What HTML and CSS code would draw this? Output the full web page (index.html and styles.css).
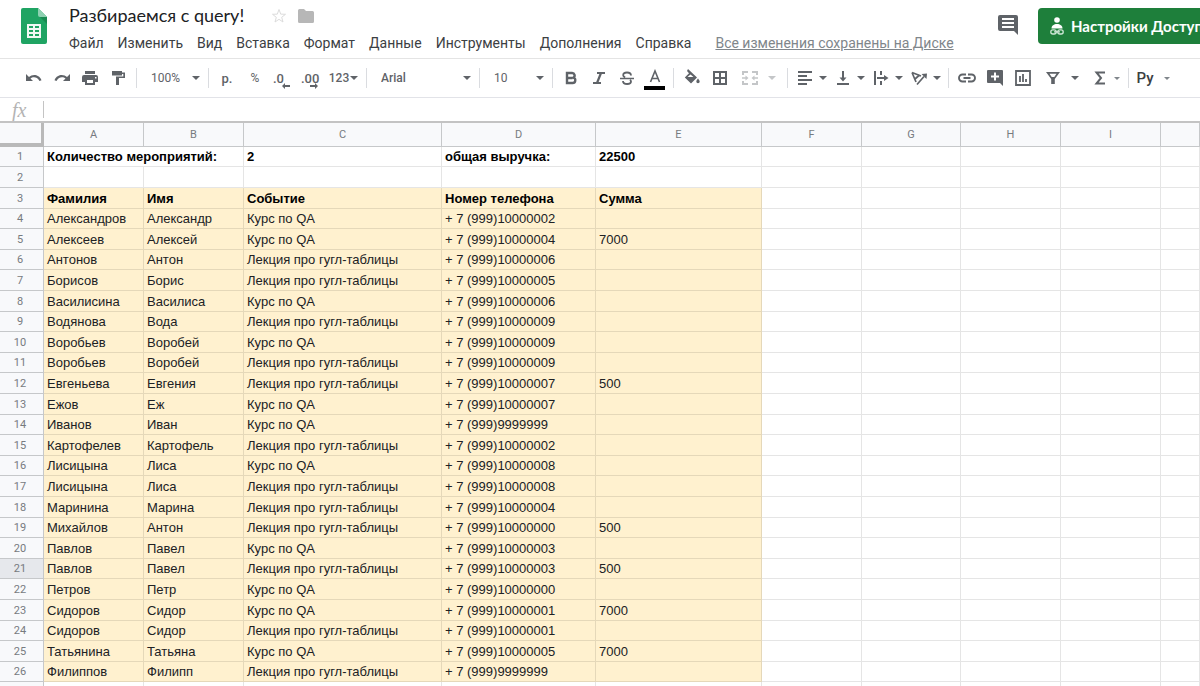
FILE: index.html
```html
<!DOCTYPE html>
<html lang="ru">
<head>
    <meta charset="UTF-8">
    <title>Разбираемся с query!</title>
    <link rel="stylesheet" href="styles.css">
</head>
<body>
    <header class="header">
        <svg class="logo" viewBox="0 0 26 36" aria-hidden="true">
            <path d="M2 0h15l9 9v25a2 2 0 0 1-2 2H2a2 2 0 0 1-2-2V2a2 2 0 0 1 2-2z" fill="#1fa463"/>
            <path d="M17 0l9 9h-7a2 2 0 0 1-2-2z" fill="#8ed1b1"/>
            <path d="M19 9h7v7z" fill="#188a51"/>
            <path fill-rule="evenodd" d="M6 16h14v14H6zM8 18v2h4v-2zm6 0v2h4v-2zm-6 4v2h4v-2zm6 0v2h4v-2zm-6 4v2h4v-2zm6 0v2h4v-2z" fill="#f1f8f4"/>
        </svg>
        <div class="doc">
            <div class="title-row">
                <h1 class="title">Разбираемся с query!</h1>
                <button class="title-btn" aria-label="Пометить">
                    <svg width="16" height="16" viewBox="0 0 16 16"><path d="M8 1.5l1.7 4.6 4.8.2-3.8 3 1.3 4.7L8 11.300l-4 2.700 1.300-4.700-3.800-3 4.800-.2z" fill="none" stroke="#dcdcdc"/></svg>
                </button>
                <button class="title-btn" aria-label="Переместить">
                    <svg width="16" height="14" viewBox="0 0 16 14"><path d="M1.500 0H6l2 2h6.500A1.500 1.500 0 0 1 16 3.500v9a1.500 1.500 0 0 1-1.500 1.500h-13A1.500 1.500 0 0 1 0 12.500v-11A1.500 1.500 0 0 1 1.500 0z" fill="#b7b7b7"/></svg>
                </button>
            </div>
            <nav class="menu">
                <button>Файл</button>
                <button>Изменить</button>
                <button>Вид</button>
                <button>Вставка</button>
                <button>Формат</button>
                <button>Данные</button>
                <button>Инструменты</button>
                <button>Дополнения</button>
                <button>Справка</button>
                <a class="saved" href="#">Все изменения сохранены на Диске</a>
            </nav>
        </div>
        <button class="comments" aria-label="Комментарии">
            <svg width="20" height="20" viewBox="0 0 20 20"><path fill-rule="evenodd" d="M2 0h16a2 2 0 0 1 2 2v18l-4-4H2a2 2 0 0 1-2-2V2a2 2 0 0 1 2-2zM4 3v2h12V3zm0 4v2h12V7zm0 4v2h12v-2z" fill="#5f6368"/></svg>
        </button>
        <button class="share">
            <svg width="14" height="18" viewBox="0 0 14 18" aria-hidden="true">
                <circle cx="7" cy="3" r="2.800" fill="#fff"/>
                <path d="M1.500 11.500c0-3 2.500-4.500 5.500-4.500s5.500 1.500 5.500 4.500z" fill="#fff"/>
                <g fill="none" stroke="#cfe8d7" stroke-width="1.300"><rect x=".8" y="12.800" width="5.400" height="4.200" rx="2.100"/><rect x="7.800" y="12.800" width="5.400" height="4.200" rx="2.100"/><path d="M4 14.900h6"/></g>
            </svg>
            Настройки Доступа
        </button>
    </header>

    <div class="toolbar">
        <button class="tool" aria-label="Отменить"><svg viewBox="0 0 18 18"><path d="M1 5v7h7L5.500 9.500c2-1.600 6.500-2.300 9 2.600l2-.8C13.500 4.500 7 5.500 4 8z" fill="currentColor"/></svg></button>
        <button class="tool" aria-label="Повторить"><svg viewBox="0 0 18 18"><path d="M17 5v7h-7l2.500-2.500c-2-1.600-6.500-2.300-9 2.600l-2-.8C4.500 4.500 11 5.500 14 8z" fill="currentColor"/></svg></button>
        <button class="tool" aria-label="Печать"><svg viewBox="0 0 18 18"><path fill-rule="evenodd" d="M4 2h10v3H4zM3 6h12a2 2 0 0 1 2 2v5h-3v3H4v-3H1V8a2 2 0 0 1 2-2zm3 5v3h6v-3zm8-3v1.500h1.500V8z" fill="currentColor"/></svg></button>
        <button class="tool" aria-label="Копировать форматирование"><svg viewBox="0 0 18 18"><path d="M3 2h10v1.500h3V9H10v7H7V7.500h7.300V5H13v1.500H3z" fill="currentColor"/></svg></button>
        <span class="sep"></span>
        <label class="picker zoom"><select aria-label="Масштаб"><option>100%</option></select></label>
        <span class="sep"></span>
        <button class="tool currency">р.</button>
        <button class="tool percent">%</button>
        <button class="tool digits">.0<svg class="arrow" viewBox="0 0 8 6"><path d="M0 3l3-3v2h5v2H3v2z" fill="currentColor"/></svg></button>
        <button class="tool digits">.00<svg class="arrow" viewBox="0 0 8 6"><path d="M8 3L5 0v2H0v2h5v2z" fill="currentColor"/></svg></button>
        <button class="tool format">123<i class="caret"></i></button>
        <span class="sep"></span>
        <label class="picker font"><select aria-label="Шрифт"><option>Arial</option></select></label>
        <span class="sep"></span>
        <label class="picker size"><select aria-label="Размер шрифта"><option>10</option></select></label>
        <span class="sep"></span>
        <button class="tool" aria-label="Полужирный"><svg viewBox="0 0 18 18"><path d="M5 4h5a2.500 2.500 0 0 1 1.300 4.700A2.700 2.700 0 0 1 10.500 14H5zM5 9h5.500" fill="none" stroke="currentColor" stroke-width="2.400"/></svg></button>
        <button class="tool" aria-label="Курсив"><svg viewBox="0 0 18 18"><path d="M7 4h8M3 14h8M11 4L7 14" fill="none" stroke="currentColor" stroke-width="2.200"/></svg></button>
        <button class="tool" aria-label="Зачеркнутый"><svg viewBox="0 0 18 18"><path d="M2 9.500h14" stroke="currentColor" stroke-width="1.500"/><path d="M13 6.500C13 4.500 11.500 3.500 9 3.500S5.200 4.500 5.200 6.200c0 1 .8 1.800 2 2.200M5 12c0 2 1.800 3 4.200 3S13 14 13 12.500c0-.7-.3-1.300-1-1.800" fill="none" stroke="currentColor" stroke-width="1.800"/></svg></button>
        <button class="tool color" aria-label="Цвет текста"><svg viewBox="0 0 18 18"><path d="M4.500 13L9 2l4.500 11M6 9.500h6" fill="none" stroke="currentColor" stroke-width="1.600"/></svg></button>
        <span class="sep"></span>
        <button class="tool" aria-label="Цвет заливки"><svg viewBox="0 0 18 18"><path fill-rule="evenodd" d="M5 0l9 8.500-6 6-6.200-6L6 4.300 4 2zM7.500 5.500L4.500 8h6z" fill="currentColor"/><path d="M15 9.500s1.700 2 1.700 3a1.700 1.700 0 0 1-3.400 0c0-1 1.700-3 1.700-3z" fill="currentColor"/></svg></button>
        <button class="tool" aria-label="Границы"><svg viewBox="0 0 18 18"><path d="M3 3h12v12H3zM9 3v12M3 9h12" fill="none" stroke="currentColor" stroke-width="2"/></svg></button>
        <button class="tool wide" disabled aria-label="Объединить ячейки"><svg viewBox="0 0 18 18"><path d="M2 6V3h5M11 3h5v3M2 12v3h5M11 15h5v-3" fill="none" stroke="currentColor" stroke-width="2"/><path d="M1 8.200h3.500V6.500L7.500 9l-3 2.500V9.800H1zM17 8.200h-3.500V6.500L10.500 9l3 2.500V9.800H17z" fill="currentColor"/></svg><i class="caret"></i></button>
        <span class="sep"></span>
        <button class="tool split" aria-label="Горизонтальное выравнивание"><svg viewBox="0 0 18 18"><path d="M2 3h14M2 7h9M2 11h14M2 15h9" stroke="currentColor" stroke-width="2"/></svg><i class="caret"></i></button>
        <button class="tool split" aria-label="Вертикальное выравнивание"><svg viewBox="0 0 18 18"><path d="M3 15h12M9 2v8" stroke="currentColor" stroke-width="2"/><path d="M5.500 8.500h7L9 12.500z" fill="currentColor"/></svg><i class="caret"></i></button>
        <button class="tool split" aria-label="Перенос текста"><svg viewBox="0 0 18 18"><path d="M3 2v14M9 2v4M9 12v4M5 9h8" stroke="currentColor" stroke-width="2"/><path d="M12 6l4.500 3-4.500 3z" fill="currentColor"/></svg><i class="caret"></i></button>
        <button class="tool split" aria-label="Поворот текста"><svg viewBox="0 0 18 18"><path d="M2 3.500l9 3.500M2 3.500L6 13M5 10l4.500-4M7 15.500l7-8" fill="none" stroke="currentColor" stroke-width="1.700"/><path d="M11.500 5l5.500-.5-.5 5.500z" fill="currentColor"/></svg><i class="caret"></i></button>
        <span class="sep"></span>
        <button class="tool" aria-label="Вставить ссылку"><svg viewBox="0 0 18 18"><path d="M8 5.500H4.500a3.500 3.500 0 0 0 0 7H8M10 5.500h3.500a3.500 3.500 0 0 1 0 7H10M5.500 9h7" fill="none" stroke="currentColor" stroke-width="1.900"/></svg></button>
        <button class="tool" aria-label="Вставить комментарий"><svg viewBox="0 0 18 18"><path fill-rule="evenodd" d="M2 1h14a1 1 0 0 1 1 1v15l-3-3H2a1 1 0 0 1-1-1V2a1 1 0 0 1 1-1zm6 2.500v3H5v2h3v3h2v-3h3v-2h-3v-3z" fill="currentColor"/></svg></button>
        <button class="tool" aria-label="Вставить диаграмму"><svg viewBox="0 0 18 18"><path d="M2 2h14v14H2z" fill="none" stroke="currentColor" stroke-width="1.800"/><path d="M6 7v6M9 5v8M12 10v3" stroke="currentColor" stroke-width="1.800"/></svg></button>
        <button class="tool wide" aria-label="Создать фильтр"><svg viewBox="0 0 18 18"><path fill-rule="evenodd" d="M2 3h14l-5.200 7V15H7.200v-5zM5.500 4.800l2.200 3.200h2.600l2.200-3.200z" fill="currentColor"/></svg><i class="caret"></i></button>
        <button class="tool split" aria-label="Функции"><svg viewBox="0 0 18 18"><path d="M14 3.500H5.500L10 9l-4.500 5.500H14" fill="none" stroke="currentColor" stroke-width="2"/></svg><i class="caret small"></i></button>
        <span class="sep"></span>
        <button class="tool lang">Ру<i class="caret small"></i></button>
    </div>

    <div class="formula-bar">
        <label class="fx" for="formula">fx</label>
        <input class="formula" id="formula" type="text">
    </div>

    <main class="grid">
        <table class="sheet">
            <colgroup>
                <col class="col-head"><col class="col-m"><col class="col-m"><col class="col-c"><col class="col-d"><col class="col-e"><col class="col-m"><col class="col-g"><col class="col-m"><col class="col-m"><col>
            </colgroup>
            <thead>
                <tr><th class="corner"></th><th>A</th><th>B</th><th>C</th><th>D</th><th>E</th><th>F</th><th>G</th><th>H</th><th>I</th><th></th></tr>
            </thead>
            <tbody>
                <tr class="bold"><th>1</th><td colspan="2">Количество мероприятий:</td><td>2</td><td>общая выручка:</td><td>22500</td><td></td><td></td><td></td><td></td><td></td></tr>
                <tr><th>2</th><td></td><td></td><td></td><td></td><td></td><td></td><td></td><td></td><td></td><td></td></tr>
                <tr class="data bold"><th>3</th><td>Фамилия</td><td>Имя</td><td>Событие</td><td>Номер телефона</td><td>Сумма</td><td></td><td></td><td></td><td></td><td></td></tr>
                <tr class="data"><th>4</th><td>Александров</td><td>Александр</td><td>Курс по QA</td><td>+ 7 (999)10000002</td><td></td><td></td><td></td><td></td><td></td><td></td></tr>
                <tr class="data"><th>5</th><td>Алексеев</td><td>Алексей</td><td>Курс по QA</td><td>+ 7 (999)10000004</td><td>7000</td><td></td><td></td><td></td><td></td><td></td></tr>
                <tr class="data"><th>6</th><td>Антонов</td><td>Антон</td><td>Лекция про гугл-таблицы</td><td>+ 7 (999)10000006</td><td></td><td></td><td></td><td></td><td></td><td></td></tr>
                <tr class="data"><th>7</th><td>Борисов</td><td>Борис</td><td>Лекция про гугл-таблицы</td><td>+ 7 (999)10000005</td><td></td><td></td><td></td><td></td><td></td><td></td></tr>
                <tr class="data"><th>8</th><td>Василисина</td><td>Василиса</td><td>Курс по QA</td><td>+ 7 (999)10000006</td><td></td><td></td><td></td><td></td><td></td><td></td></tr>
                <tr class="data"><th>9</th><td>Водянова</td><td>Вода</td><td>Лекция про гугл-таблицы</td><td>+ 7 (999)10000009</td><td></td><td></td><td></td><td></td><td></td><td></td></tr>
                <tr class="data"><th>10</th><td>Воробьев</td><td>Воробей</td><td>Курс по QA</td><td>+ 7 (999)10000009</td><td></td><td></td><td></td><td></td><td></td><td></td></tr>
                <tr class="data"><th>11</th><td>Воробьев</td><td>Воробей</td><td>Лекция про гугл-таблицы</td><td>+ 7 (999)10000009</td><td></td><td></td><td></td><td></td><td></td><td></td></tr>
                <tr class="data"><th>12</th><td>Евгеньева</td><td>Евгения</td><td>Лекция про гугл-таблицы</td><td>+ 7 (999)10000007</td><td>500</td><td></td><td></td><td></td><td></td><td></td></tr>
                <tr class="data"><th>13</th><td>Ежов</td><td>Еж</td><td>Курс по QA</td><td>+ 7 (999)10000007</td><td></td><td></td><td></td><td></td><td></td><td></td></tr>
                <tr class="data"><th>14</th><td>Иванов</td><td>Иван</td><td>Курс по QA</td><td>+ 7 (999)9999999</td><td></td><td></td><td></td><td></td><td></td><td></td></tr>
                <tr class="data"><th>15</th><td>Картофелев</td><td>Картофель</td><td>Лекция про гугл-таблицы</td><td>+ 7 (999)10000002</td><td></td><td></td><td></td><td></td><td></td><td></td></tr>
                <tr class="data"><th>16</th><td>Лисицына</td><td>Лиса</td><td>Курс по QA</td><td>+ 7 (999)10000008</td><td></td><td></td><td></td><td></td><td></td><td></td></tr>
                <tr class="data"><th>17</th><td>Лисицына</td><td>Лиса</td><td>Лекция про гугл-таблицы</td><td>+ 7 (999)10000008</td><td></td><td></td><td></td><td></td><td></td><td></td></tr>
                <tr class="data"><th>18</th><td>Маринина</td><td>Марина</td><td>Лекция про гугл-таблицы</td><td>+ 7 (999)10000004</td><td></td><td></td><td></td><td></td><td></td><td></td></tr>
                <tr class="data"><th>19</th><td>Михайлов</td><td>Антон</td><td>Лекция про гугл-таблицы</td><td>+ 7 (999)10000000</td><td>500</td><td></td><td></td><td></td><td></td><td></td></tr>
                <tr class="data"><th>20</th><td>Павлов</td><td>Павел</td><td>Курс по QA</td><td>+ 7 (999)10000003</td><td></td><td></td><td></td><td></td><td></td><td></td></tr>
                <tr class="data active"><th>21</th><td>Павлов</td><td>Павел</td><td>Лекция про гугл-таблицы</td><td>+ 7 (999)10000003</td><td>500</td><td></td><td></td><td></td><td></td><td></td></tr>
                <tr class="data"><th>22</th><td>Петров</td><td>Петр</td><td>Курс по QA</td><td>+ 7 (999)10000000</td><td></td><td></td><td></td><td></td><td></td><td></td></tr>
                <tr class="data"><th>23</th><td>Сидоров</td><td>Сидор</td><td>Курс по QA</td><td>+ 7 (999)10000001</td><td>7000</td><td></td><td></td><td></td><td></td><td></td></tr>
                <tr class="data"><th>24</th><td>Сидоров</td><td>Сидор</td><td>Лекция про гугл-таблицы</td><td>+ 7 (999)10000001</td><td></td><td></td><td></td><td></td><td></td><td></td></tr>
                <tr class="data"><th>25</th><td>Татьянина</td><td>Татьяна</td><td>Курс по QA</td><td>+ 7 (999)10000005</td><td>7000</td><td></td><td></td><td></td><td></td><td></td></tr>
                <tr class="data"><th>26</th><td>Филиппов</td><td>Филипп</td><td>Лекция про гугл-таблицы</td><td>+ 7 (999)9999999</td><td></td><td></td><td></td><td></td><td></td><td></td></tr>
                <tr><th></th><td></td><td></td><td></td><td></td><td></td><td></td><td></td><td></td><td></td><td></td></tr>
            </tbody>
        </table>
    </main>
</body>
</html>
```
FILE: styles.css
```css
* {
    margin: 0;
    padding: 0;
    box-sizing: border-box;
}

body {
    height: 100vh;
    display: flex;
    flex-direction: column;
    overflow: hidden;
    background: #fff;
    color: #202124;
    font-family: Roboto, 'Liberation Sans', Arial, sans-serif;
}

button,
select,
input {
    border: none;
    background: none;
    color: inherit;
    font: inherit;
    cursor: pointer;
}

/* header */
.header {
    display: flex;
    align-items: flex-start;
    flex: none;
    height: 58px;
}

.logo {
    flex: none;
    width: 26px;
    height: 36px;
    margin: 8px 22px 0 21px;
}

.doc {
    flex: 1;
    min-width: 0;
}

.title-row {
    display: flex;
    align-items: center;
    height: 32px;
}

.title {
    margin-right: 27px;
    padding-bottom: 2px;
    font-family: Lato, Roboto, sans-serif;
    font-size: 18px;
    font-weight: 400;
    white-space: nowrap;
}

.title-btn {
    display: flex;
    margin-right: 11px;
}

.menu {
    display: flex;
    gap: 14px;
    font-size: 14px;
    line-height: 22px;
    white-space: nowrap;
    color: #3c4043;
}

.saved {
    margin-left: 10px;
    color: #80868b;
}

.comments {
    display: flex;
    margin: 15px 20px 0;
}

.share {
    display: flex;
    align-items: center;
    gap: 7px;
    flex: 0 0 162px;
    height: 36px;
    margin-top: 8px;
    padding-left: 12px;
    overflow: hidden;
    border-radius: 4px 0 0 4px;
    background: #1e7f3b;
    color: #fff;
    font-family: Lato, Roboto, sans-serif;
    font-size: 15px;
    font-weight: 700;
    line-height: 16px;
    white-space: nowrap;
}

.share svg {
    flex: none;
}

/* toolbar */
.toolbar {
    display: flex;
    align-items: center;
    flex: none;
    height: 40px;
    padding-left: 20px;
    border-top: 1px solid #e4e4e4;
    border-bottom: 1px solid #e2e3e8;
    color: #5f6368;
    font-size: 12px;
    font-weight: 500;
}

.tool {
    display: flex;
    align-items: center;
    justify-content: center;
    flex: none;
    position: relative;
    width: 28px;
    height: 28px;
}

.tool svg {
    flex: none;
    width: 18px;
    height: 18px;
}

.tool:disabled {
    color: #c4c6c8;
}

.tool.currency {
    font-size: 13px;
}

.tool.percent {
    font-weight: 400;
}

.tool.digits {
    justify-content: flex-start;
    padding-left: 4px;
    font-size: 13px;
}

.tool .arrow {
    position: absolute;
    right: 7px;
    bottom: 3px;
    width: 8px;
    height: 6px;
}

.tool.format {
    width: 37px;
    gap: 1px;
}

.tool.split {
    width: 38px;
    gap: 5px;
}

.tool.wide {
    width: 49px;
    gap: 9px;
}

.tool.color::after {
    content: '';
    position: absolute;
    left: 3px;
    bottom: 2px;
    width: 21px;
    height: 4px;
    background: #000;
}

.tool.lang {
    width: 40px;
    gap: 10px;
    color: #3c4043;
    font-size: 15px;
}

.caret {
    border: 4px solid transparent;
    border-top-color: currentColor;
    border-bottom: 0;
}

.caret.small {
    border-width: 3px 3px 0;
    color: #80868b;
}

.sep {
    flex: none;
    width: 1px;
    height: 20px;
    margin: 0 4px;
    background: #dadce0;
}

.picker {
    display: flex;
    align-items: center;
    flex: none;
    position: relative;
    height: 28px;
}

.picker select {
    width: 100%;
    padding-left: 10px;
    appearance: none;
}

.picker::after {
    content: '';
    position: absolute;
    right: 4px;
    border: 4px solid transparent;
    border-top-color: currentColor;
    border-bottom: 0;
    pointer-events: none;
}

.zoom {
    width: 63px;
    font-weight: 400;
}

.font {
    width: 104px;
}

.size {
    width: 64px;
    font-weight: 400;
}

/* formula bar */
.formula-bar {
    display: flex;
    align-items: center;
    flex: none;
    height: 23px;
}

.fx {
    width: 43px;
    padding-left: 12px;
    color: #b4b4b4;
    font-family: 'Liberation Serif', serif;
    font-size: 20px;
    font-style: italic;
    line-height: 20px;
}

.formula {
    flex: 1;
    height: 17px;
    padding-left: 6px;
    border-left: 1px solid #c4c4c4;
    cursor: text;
}

/* sheet */
.grid {
    flex: 1;
    min-height: 0;
    overflow: hidden;
    border-top: 2px solid #c3c3c3;
}

.sheet {
    width: 100%;
    table-layout: fixed;
    border-collapse: separate;
    border-spacing: 0;
    font-family: 'Liberation Sans', Arial, sans-serif;
    font-size: 13px;
    line-height: 18px;
}

.col-head { width: 44px; }
.col-m { width: 100px; }
.col-c { width: 198px; }
.col-d { width: 154px; }
.col-e { width: 166px; }
.col-g { width: 99px; }

.sheet th {
    border-right: 1px solid #c6c8ca;
    border-bottom: 1px solid #c6c8ca;
    background: #f8f9fb;
    color: #777b80;
    font-family: Roboto, sans-serif;
    font-size: 11px;
    font-weight: 400;
    text-align: center;
}

.sheet thead th {
    height: 24px;
}

.sheet thead .corner {
    border-right: 3px solid #b9b9b9;
    border-bottom: 4px solid #b9b9b9;
}

.sheet tbody tr {
    height: 21px;
}

.sheet tbody tr:nth-child(5n + 1),
.sheet tbody tr:nth-child(5n + 4) {
    height: 20px;
}

.sheet tbody th {
    padding: 1px 3px 0 0;
}

.sheet td {
    padding: 1px 3px 0;
    border-right: 1px solid rgba(0, 0, 0, 0.1);
    border-bottom: 1px solid rgba(0, 0, 0, 0.1);
    white-space: nowrap;
}

.bold td {
    color: #000;
    font-weight: 700;
}

.data td:nth-child(-n + 6) {
    background: #fff1cf;
}

.active th {
    background: #e6e8ec;
}
```
